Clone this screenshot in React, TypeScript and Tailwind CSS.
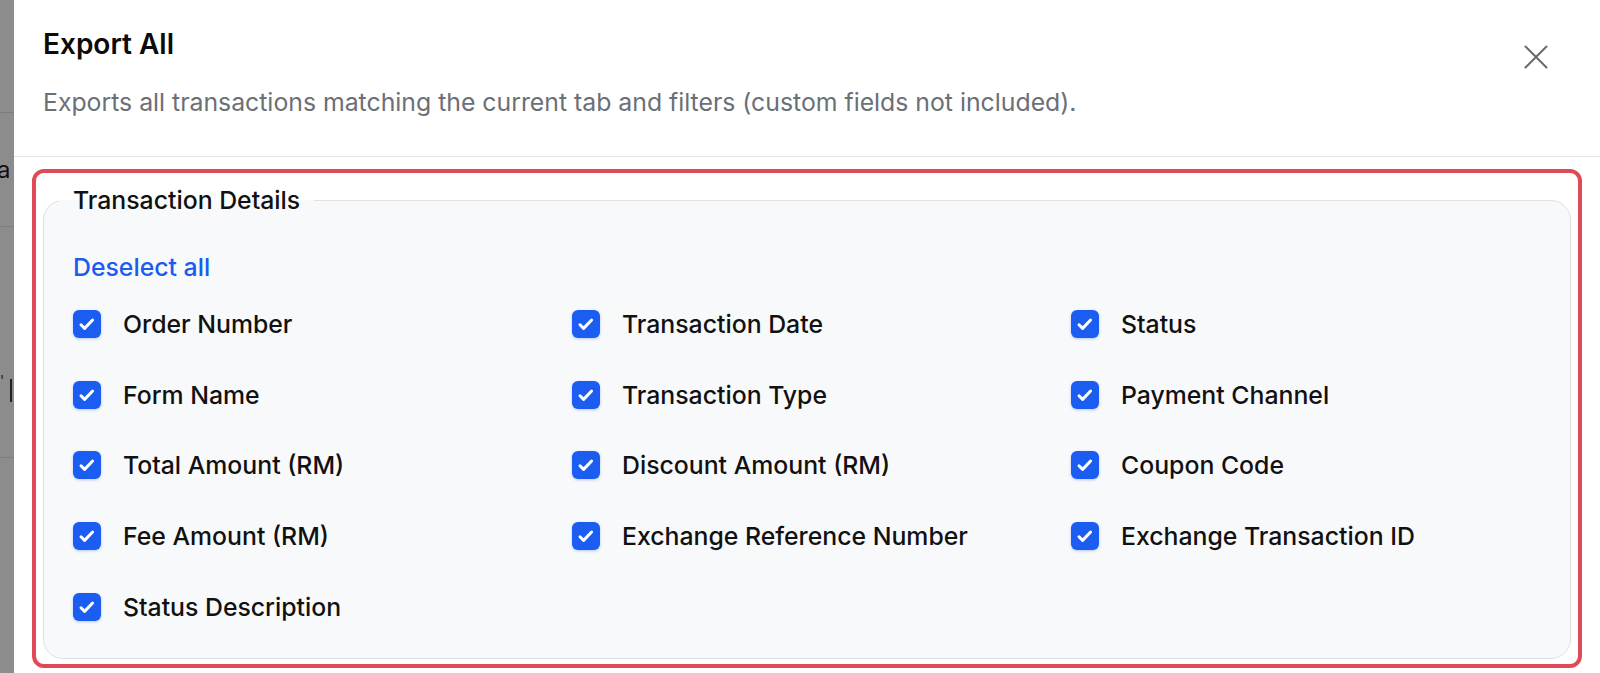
import React from "react";

const fields: string[] = [
  "Order Number",
  "Transaction Date",
  "Status",
  "Form Name",
  "Transaction Type",
  "Payment Channel",
  "Total Amount (RM)",
  "Discount Amount (RM)",
  "Coupon Code",
  "Fee Amount (RM)",
  "Exchange Reference Number",
  "Exchange Transaction ID",
  "Status Description",
];

const CheckIcon = () => (
  <svg viewBox="0 0 28 28" className="h-[28px] w-[28px]" fill="none">
    <path
      d="M8 14.8l3.6 3.6 8-8.4"
      stroke="white"
      strokeWidth="3"
      strokeLinecap="round"
      strokeLinejoin="round"
    />
  </svg>
);

const FieldCheckbox = ({ label }: { label: string }) => (
  <label className="flex h-[70.6px] items-center gap-[22px]">
    <span className="flex h-[28px] w-[28px] shrink-0 items-center justify-center rounded-[6px] bg-[#1b5cf1] shadow-[0_1px_3px_rgba(26,92,240,0.3)]">
      <CheckIcon />
    </span>
    <span className="text-[24.8px] font-medium leading-[36px] text-[#111111]">{label}</span>
  </label>
);

const App: React.FC = () => {
  return (
    <div
      className="flex h-[673px] w-[1600px] overflow-hidden bg-white"
      style={{ fontFamily: "Inter, 'Noto Sans', sans-serif" }}
    >
      {/* Backdrop strip with page content behind */}
      <div className="flex w-[14px] shrink-0 flex-col overflow-hidden bg-[#8c8c8c]">
        <div className="h-[113px] border-b border-[#7d7d7d]"></div>
        <div className="flex h-[114px] items-center border-b border-[#7d7d7d] text-[24px] text-[#111]">
          <span className="-ml-[3px]">a</span>
        </div>
        <div className="flex h-[231px] items-end gap-[6px] border-b border-[#7d7d7d] pb-[55px]">
          <span className="mb-[14px] text-[14px] leading-none text-[#222]">'</span>
          <span className="h-[23px] w-[2px] bg-[#222]"></span>
        </div>
        <div className="flex-1"></div>
      </div>

      {/* Modal */}
      <div className="flex min-w-0 flex-1 flex-col">
        <div className="flex items-start justify-between border-b border-[#e3e3e3] pl-[29px] pr-[52px] pt-[26px] pb-[36px]">
          <div>
            <h2 className="text-[28px] font-semibold leading-[36px] text-[#0b0b0b]">
              Export All
            </h2>
            <p className="mt-[22px] text-[24.8px] leading-[36px] text-[#6b6f76]">
              Exports all transactions matching the current tab and filters (custom fields not included).
            </p>
          </div>
          <button className="mt-[19px] text-[#6b6b6b]">
            <svg viewBox="0 0 24 24" className="h-[24px] w-[24px]" fill="none" stroke="currentColor" strokeWidth="2" strokeLinecap="round">
              <path d="M1.5 1.5l21 21M22.5 1.5l-21 21" />
            </svg>
          </button>
        </div>

        <div className="px-[18px] pt-[12px]">
          <div className="rounded-[12px] border-4 border-[#de4a55] px-[7px] pt-[9px] pb-[5px]">
            <fieldset className="rounded-[20px] border border-[#dfe1e4] bg-[#f8f9fb] px-[29px] pb-[16px]">
              <legend className="ml-[-14px] px-[14px] text-[24.8px] font-medium leading-[36px] text-[#111]">
                Transaction Details
              </legend>
              <button className="mt-[31px] text-[24.8px] font-medium leading-[36px] text-[#1a5cf0]">
                Deselect all
              </button>
              <div className="mt-[4px] grid grid-cols-[499px_499px_1fr]">
                {fields.map((f) => (
                  <FieldCheckbox key={f} label={f} />
                ))}
              </div>
            </fieldset>
          </div>
        </div>
      </div>
    </div>
  );
};

export default App;
